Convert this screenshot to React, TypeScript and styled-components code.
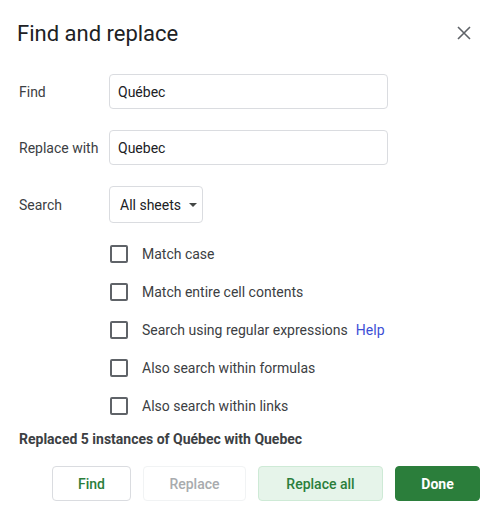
import styled, {createGlobalStyle} from 'styled-components';

const GlobalStyle = createGlobalStyle`
  html, body {
    margin: 0;
    padding: 0;
    background: #fff;
  }
  body {
    font-family: Roboto, "Liberation Sans", Arial, sans-serif;
    color: #3c4043;
  }
`;

const options = [
    'Match case',
    'Match entire cell contents',
    'Search using regular expressions',
    'Also search within formulas',
    'Also search within links',
];

export default function App(): JSX.Element {
    return (
        <Dialog>
            <GlobalStyle/>
            <Header>
                <Title>Find and replace</Title>
                <CloseButton aria-label="Close">
                    <svg width="14" height="14" viewBox="0 0 14 14">
                        <path d="M1 1 L13 13 M13 1 L1 13" stroke="#5f6368" strokeWidth="1.6" fill="none"/>
                    </svg>
                </CloseButton>
            </Header>

            <FieldRow>
                <Label>Find</Label>
                <TextBox>Québec</TextBox>
            </FieldRow>
            <FieldRow $top={21}>
                <Label>Replace with</Label>
                <TextBox>Quebec</TextBox>
            </FieldRow>
            <FieldRow $top={21}>
                <Label>Search</Label>
                <Select>
                    All sheets
                    <Caret/>
                </Select>
            </FieldRow>

            <Options>
                {options.map((o, i) => (
                    <OptionRow key={o}>
                        <Box/>
                        <span>{o}</span>
                        {i === 2 && <HelpLink>Help</HelpLink>}
                    </OptionRow>
                ))}
            </Options>

            <Status>Replaced 5 instances of Québec with Quebec</Status>

            <Actions>
                <Button $w={79}>Find</Button>
                <Button $w={103} $variant="disabled">Replace</Button>
                <Button $w={125} $variant="tonal">Replace all</Button>
                <Button $w={85} $variant="primary">Done</Button>
            </Actions>
        </Dialog>
    );
}

const Dialog = styled.div`
  width: 491px;
  height: 511px;
  box-sizing: border-box;
  padding: 0 11px 0 19px;
  display: flex;
  flex-direction: column;
`;

const Header = styled.div`
  display: flex;
  justify-content: space-between;
  align-items: center;
  height: 28px;
  margin-top: 19px;
  margin-left: -2px;
`;

const Title = styled.h1`
  margin: 0;
  font-family: Roboto, "Open Sans", sans-serif;
  font-weight: 400;
  font-size: 22px;
  color: #202124;
  letter-spacing: 0;
`;

const CloseButton = styled.div`
  width: 24px;
  height: 24px;
  display: flex;
  align-items: center;
  justify-content: center;
  margin-right: 4px;
`;

const FieldRow = styled.div<{ $top?: number }>`
  display: flex;
  align-items: center;
  margin-top: ${p => p.$top ?? 27}px;
`;

const Label = styled.div`
  width: 90px;
  font-size: 14px;
  color: #3c4043;
`;

const TextBox = styled.div`
  width: 279px;
  height: 35px;
  box-sizing: border-box;
  border: 1px solid #dadce0;
  border-radius: 4px;
  padding: 0 8px;
  display: flex;
  align-items: center;
  font-size: 14px;
  color: #202124;
`;

const Select = styled.div`
  width: 94px;
  height: 37px;
  box-sizing: border-box;
  border: 1px solid #dadce0;
  border-radius: 4px;
  padding: 0 0 0 10px;
  display: flex;
  align-items: center;
  font-size: 14px;
  color: #202124;
`;

const Caret = styled.span`
  width: 0;
  height: 0;
  margin-left: 8px;
  border-left: 4px solid transparent;
  border-right: 4px solid transparent;
  border-top: 4px solid #444746;
`;

const Options = styled.div`
  display: flex;
  flex-direction: column;
  margin-top: 22px;
  padding-left: 91px;
  gap: 20px;
`;

const OptionRow = styled.div`
  display: flex;
  align-items: center;
  height: 18px;
  font-size: 14px;
  color: #3c4043;
`;

const Box = styled.span`
  width: 18px;
  height: 18px;
  box-sizing: border-box;
  border: 2px solid #5f6368;
  border-radius: 2px;
  margin-right: 14px;
  flex: none;
`;

const HelpLink = styled.span`
  color: #3c4fd6;
  margin-left: 8px;
`;

const Status = styled.div`
  margin-top: 16px;
  font-size: 14px;
  font-weight: 700;
  color: #3c4043;
`;

const Actions = styled.div`
  display: flex;
  justify-content: flex-end;
  gap: 12px;
  margin-top: 19px;
`;

const Button = styled.div<{ $w: number; $variant?: 'outline' | 'disabled' | 'tonal' | 'primary' }>`
  width: ${p => p.$w}px;
  height: 35px;
  box-sizing: border-box;
  border-radius: 4px;
  display: flex;
  align-items: center;
  justify-content: center;
  font-size: 14px;
  font-weight: ${p => (p.$variant === 'primary' ? 700 : 500)};
  border: 1px solid ${p =>
    p.$variant === 'disabled' ? '#f1f3f4' :
    p.$variant === 'tonal' ? '#ceead6' :
    p.$variant === 'primary' ? '#2b7e3b' : '#dadce0'};
  background: ${p =>
    p.$variant === 'tonal' ? '#e6f4ea' :
    p.$variant === 'primary' ? '#2b7e3b' : '#fff'};
  color: ${p =>
    p.$variant === 'disabled' ? '#a8abae' :
    p.$variant === 'primary' ? '#fff' : '#2b7e3b'};
`;
